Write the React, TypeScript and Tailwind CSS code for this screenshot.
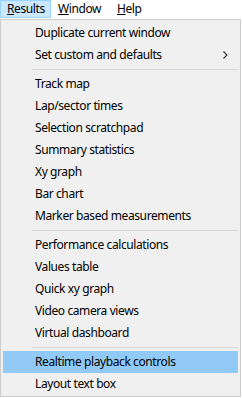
import React from "react";

type Entry = { label: string; sub?: boolean; active?: boolean } | "sep";

const entries: Entry[] = [
  { label: "Duplicate current window" },
  { label: "Set custom and defaults", sub: true },
  "sep",
  { label: "Track map" },
  { label: "Lap/sector times" },
  { label: "Selection scratchpad" },
  { label: "Summary statistics" },
  { label: "Xy graph" },
  { label: "Bar chart" },
  { label: "Marker based measurements" },
  "sep",
  { label: "Performance calculations" },
  { label: "Values table" },
  { label: "Quick xy graph" },
  { label: "Video camera views" },
  { label: "Virtual dashboard" },
  "sep",
  { label: "Realtime playback controls", active: true },
  { label: "Layout text box" },
];

export default function App() {
  return (
    <div className="w-[242px] h-[398px] bg-white text-[12px] text-black font-['Noto_Sans',sans-serif] tracking-[-0.4px] overflow-hidden">
      {/* Menu bar */}
      <div className="flex h-[19px] items-start">
        <div className="h-[18px] w-[51px] border border-[#99d1ff] bg-[#cce8ff] flex items-center pl-[6px] leading-none">
          <span><u>R</u>esults</span>
        </div>
        <div className="h-[18px] w-[59px] pl-[7px] flex items-center leading-none">
          <span><u>W</u>indow</span>
        </div>
        <div className="h-[18px] pl-[7px] flex items-center leading-none">
          <span><u>H</u>elp</span>
        </div>
      </div>

      {/* Dropdown */}
      <div className="w-[241px] h-[378px] border border-[#cccccc] bg-[#f0f0f0] py-[2px] px-[2px]">
        {entries.map((e, i) =>
          e === "sep" ? (
            <div key={i} className="h-[7px] flex items-center pl-[29px]">
              <div className="h-px w-full bg-[#d7d7d7]" />
            </div>
          ) : (
            <div
              key={i}
              className={`h-[22px] flex items-center pl-[32px] pr-[8px] ${e.active ? "bg-[#91c9f7]" : ""}`}
            >
              <span className="flex-1 whitespace-nowrap">{e.label}</span>
              {e.sub && (
                <svg width="5" height="8" viewBox="0 0 5 8" className="mr-[2px]">
                  <path d="M0.5 0.5 L4 4 L0.5 7.5" fill="none" stroke="#333" strokeWidth="1.1" />
                </svg>
              )}
            </div>
          )
        )}
      </div>
    </div>
  );
}
